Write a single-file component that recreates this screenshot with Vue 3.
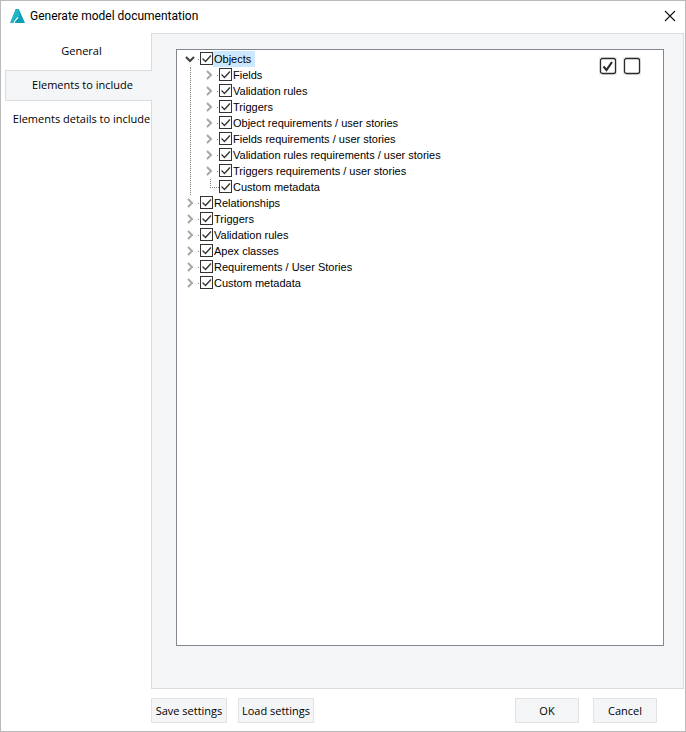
<script setup>
import { ref, reactive } from 'vue'

const tabs = ['General', 'Elements to include', 'Elements details to include']
const activeTab = ref(1)

const node = (id, label, expandable = true, children = []) => ({
  id, label, expandable, children, checked: true, open: children.length > 0
})

const tree = reactive([
  node('objects', 'Objects', true, [
    node('o-fields', 'Fields'),
    node('o-rules', 'Validation rules'),
    node('o-triggers', 'Triggers'),
    node('o-req', 'Object requirements / user stories'),
    node('o-fields-req', 'Fields requirements / user stories'),
    node('o-rules-req', 'Validation rules requirements / user stories'),
    node('o-triggers-req', 'Triggers requirements / user stories'),
    node('o-meta', 'Custom metadata', false)
  ]),
  node('relationships', 'Relationships'),
  node('triggers', 'Triggers'),
  node('rules', 'Validation rules'),
  node('apex', 'Apex classes'),
  node('req', 'Requirements / User Stories'),
  node('meta', 'Custom metadata')
])
const selected = ref('objects')

function setAll(value) {
  for (const n of tree) {
    n.checked = value
    for (const c of n.children) c.checked = value
  }
}
</script>

<template>
  <div class="dialog">
    <header class="titlebar">
      <svg class="logo" viewBox="0 0 16 16" aria-hidden="true">
        <path d="M6.6 1h3.2L16 15H5.2L9 9.6z" fill="#0f9fb4" />
        <path d="M6.6 1h2.6l1.8 6.4Q7 9.5 4.6 15H1z" fill="#1fb4c6" />
        <path d="M9.4 9.6Q6.4 11.4 4.6 15.2" stroke="#fff" stroke-width=".9" />
      </svg>
      <h1>Generate model documentation</h1>
      <button class="close" type="button" aria-label="Close">
        <svg viewBox="0 0 12 12"><path d="M1 1l10 10M11 1L1 11" stroke="#111" stroke-width="1.1" fill="none" /></svg>
      </button>
    </header>

    <div class="body">
      <nav class="tabs">
        <button
          v-for="(t, i) in tabs" :key="t" type="button"
          class="tab" :class="{ active: i === activeTab }" @click="activeTab = i"
        >{{ t }}</button>
      </nav>

      <main class="panel">
        <div class="treebox">
          <ul class="tree">
            <li v-for="n in tree" :key="n.id">
              <div class="row">
                <button class="toggle" :class="{ open: n.open }" type="button" :aria-label="'Expand ' + n.label" @click="n.open = !n.open">
                  <svg v-if="n.open" viewBox="0 0 10 10"><path d="M1 3l4 4 4-4" /></svg>
                  <svg v-else viewBox="0 0 10 10"><path d="M3 1l4 4-4 4" /></svg>
                </button>
                <span class="check">
                  <input :id="n.id" v-model="n.checked" type="checkbox">
                  <svg viewBox="0 0 13 13"><path d="M2.5 6.5l3 3 5.5-6" /></svg>
                </span>
                <label :for="n.id" :class="{ selected: n.id === selected }">{{ n.label }}</label>
              </div>
              <ul v-if="n.open && n.children.length" class="children">
                <li v-for="c in n.children" :key="c.id" class="row">
                  <button v-if="c.expandable" class="toggle" type="button" :aria-label="'Expand ' + c.label">
                    <svg viewBox="0 0 10 10"><path d="M3 1l4 4-4 4" /></svg>
                  </button>
                  <span v-else class="elbow"></span>
                  <span class="check">
                    <input :id="c.id" v-model="c.checked" type="checkbox">
                    <svg viewBox="0 0 13 13"><path d="M2.5 6.5l3 3 5.5-6" /></svg>
                  </span>
                  <label :for="c.id">{{ c.label }}</label>
                </li>
              </ul>
            </li>
          </ul>
          <div class="bulk">
            <button type="button" aria-label="Select all" @click="setAll(true)">
              <svg viewBox="0 0 18 18">
                <rect x="1.5" y="1.5" width="15" height="15" rx="2" />
                <path d="M4.5 9.5l3 3.5L13 5" stroke-width="2.2" />
              </svg>
            </button>
            <button type="button" aria-label="Clear all" @click="setAll(false)">
              <svg viewBox="0 0 18 18"><rect x="1.5" y="1.5" width="15" height="15" rx="2" /></svg>
            </button>
          </div>
        </div>
      </main>
    </div>

    <footer class="actions">
      <button class="btn wide" type="button">Save settings</button>
      <button class="btn wide" type="button">Load settings</button>
      <span class="spacer"></span>
      <button class="btn" type="button">OK</button>
      <button class="btn" type="button">Cancel</button>
    </footer>
  </div>
</template>

<style>
body { background: #fff; }
</style>

<style scoped>
.dialog, .dialog * { box-sizing: border-box; }
.dialog {
  display: flex;
  flex-direction: column;
  min-height: 100vh;
  border: 1px solid #b9b9b9;
  background: #fff;
  color: #000;
  font: 11px/16px "Segoe UI", "Open Sans", "Noto Sans", sans-serif;
}
button { font: inherit; color: inherit; padding: 0; border: 0; background: none; }
svg { display: block; fill: none; }
ul { list-style: none; margin: 0; padding: 0; }

.titlebar { display: flex; align-items: center; height: 32px; padding: 0 7px 2px 8px; }
.logo { width: 16px; height: 16px; }
h1 { flex: 1; margin: 0 0 0 5px; font: 400 12px/16px "Segoe UI", Roboto, sans-serif; }
.close { padding: 2px; }
.close svg { width: 12px; height: 12px; }

.body { flex: 1; display: flex; padding-right: 1px; }
.tabs { width: 150px; flex: none; padding: 1px 0 0 4px; }
.tab {
  display: block;
  width: 100%;
  height: 34px;
  padding-left: 7px;
  white-space: nowrap;
}
.tab.active {
  position: relative;
  width: calc(100% + 1px);
  height: 31px;
  margin: 2px 0 1px;
  padding-bottom: 1px;
  border: 1px solid #d9dbdd;
  border-right: 0;
  background: #f4f5f7;
}
.panel {
  flex: 1;
  display: flex;
  padding: 15px 19px 42px 24px;
  border: 1px solid #d9dbdd;
  background: #f4f5f7;
}
.treebox {
  flex: 1;
  display: flex;
  justify-content: space-between;
  align-items: flex-start;
  padding: 1px 22px 1px 3px;
  border: 1px solid #828790;
  background: #fff;
}

.tree { font-family: Tahoma, "Liberation Sans", sans-serif; }
.row { display: flex; align-items: flex-start; height: 16px; }
.toggle { display: grid; place-items: center; width: 20px; height: 16px; position: relative; }
.toggle svg { width: 10px; height: 10px; stroke: #a6a6a6; stroke-width: 2; }
.toggle.open svg { stroke: #404040; }
.toggle::after {
  content: "";
  position: absolute;
  right: 1px;
  top: 8px;
  width: 1px;
  height: 1px;
  background: #808080;
}
.children { margin-left: 10px; padding-left: 8px; border-left: 1px dotted #808080; }
.elbow {
  width: 9px;
  height: 9px;
  margin-left: 11px;
  border: dotted #808080;
  border-width: 0 0 1px 1px;
}
.check { display: grid; width: 13px; height: 13px; margin-top: 1px; flex: none; }
.check > * { grid-area: 1 / 1; }
.check input {
  appearance: none;
  width: 13px;
  height: 13px;
  margin: 0;
  border: 1px solid #333;
  background: #fff;
}
.check svg {
  width: 13px;
  height: 13px;
  pointer-events: none;
  stroke: #333;
  stroke-width: 1.3;
  visibility: hidden;
}
.check input:checked + svg { visibility: visible; }
label { padding: 0 4px 0 1px; white-space: nowrap; }
label.selected { background: #cce8ff; }

.bulk { display: flex; gap: 6px; padding-top: 6px; }
.bulk button { background: #ececec; }
.bulk svg { width: 18px; height: 18px; stroke: #2b2b2b; stroke-width: 1.3; }
.bulk rect { fill: #fff; }

.actions { display: flex; gap: 11px; padding: 9px 28px 8px 150px; }
.spacer { flex: 1; }
.btn { width: 64px; height: 25px; border: 1px solid #e1e2e4; background: #f4f5f7; white-space: nowrap; }
.btn.wide { width: 76px; }
.btn:last-child { margin-left: 3px; }
</style>
